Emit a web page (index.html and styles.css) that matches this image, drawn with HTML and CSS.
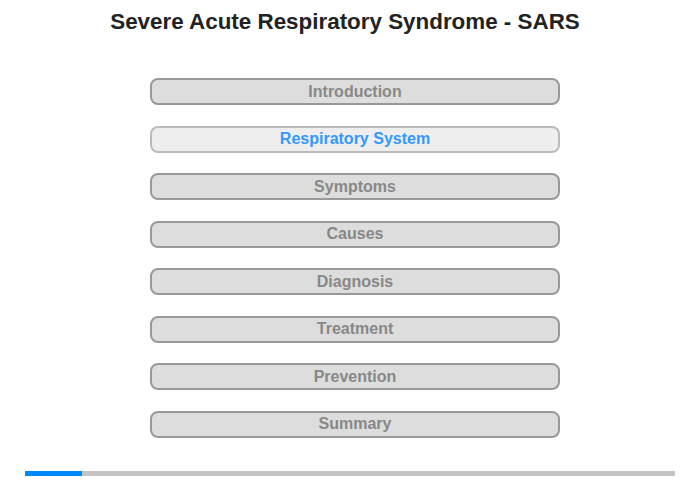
FILE: index.html
```html
<!DOCTYPE html>
<html lang="en">
<head>
    <meta charset="UTF-8">
    <meta name="viewport" content="width=device-width, initial-scale=1.0">
    <title>SARS</title>
    <link rel="stylesheet" href="styles.css">
</head>
<body>
    <h1 class="title">Severe Acute Respiratory Syndrome - SARS</h1>
    <div class="menu">
        <button class="topic">Introduction</button>
        <button class="topic active">Respiratory System</button>
        <button class="topic">Symptoms</button>
        <button class="topic">Causes</button>
        <button class="topic">Diagnosis</button>
        <button class="topic">Treatment</button>
        <button class="topic">Prevention</button>
        <button class="topic">Summary</button>
    </div>
    <div class="progress">
        <div class="progress-fill"></div>
    </div>
</body>
</html>
```

FILE: styles.css
```css
body {
    font-family: "Liberation Sans", Arial, sans-serif;
    margin: 0;
    padding: 0;
    background: #fff;
}
.title {
    font-size: 22.4px;
    font-weight: bold;
    color: #222;
    text-align: center;
    margin: 9px 0 0;
    line-height: 26px;
    padding-right: 10px;
}
.menu {
    display: flex;
    flex-direction: column;
    gap: 20.5px;
    width: 410px;
    margin: 43px 0 0 150px;
}
.topic {
    height: 27px;
    box-sizing: border-box;
    background: #dddddd;
    border: 2px solid #999;
    border-radius: 8px;
    color: #888;
    font-family: "Liberation Sans", Arial, sans-serif;
    font-size: 16px;
    font-weight: bold;
    padding: 0;
    cursor: pointer;
}
.topic.active {
    background: #eeeeee;
    border-color: #bbb;
    color: #3399ff;
}
.progress {
    margin: 33px 25px 0;
    height: 5px;
    background: #c4c4c4;
}
.progress-fill {
    width: 57px;
    height: 100%;
    background: #0088ff;
}
```
